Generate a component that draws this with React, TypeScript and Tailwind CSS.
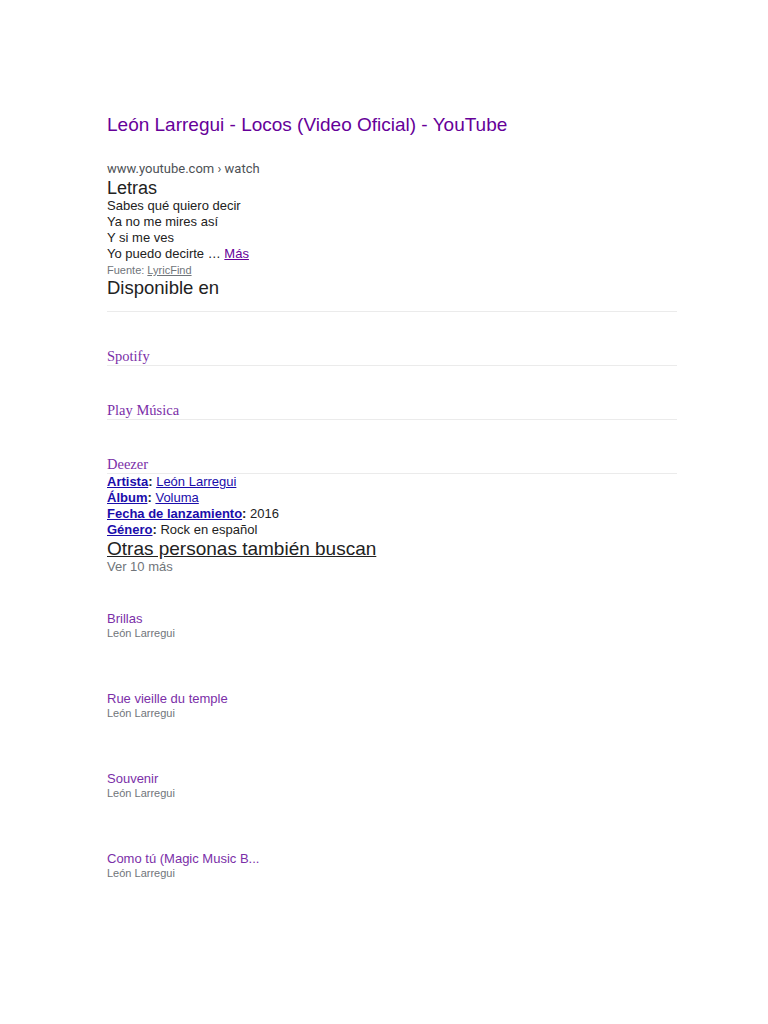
import React from 'react';

const PROVIDERS = ['Spotify', 'Play Música', 'Deezer'];

const RELATED = [
  { title: 'Brillas', artist: 'León Larregui' },
  { title: 'Rue vieille du temple', artist: 'León Larregui' },
  { title: 'Souvenir', artist: 'León Larregui' },
  { title: 'Como tú (Magic Music B...', artist: 'León Larregui' },
];

const App: React.FC = () => {
  return (
    <div className="min-h-[1024px] bg-white font-['Liberation_Sans',Arial,sans-serif] text-[#222]">
      <div className="ml-[107px] w-[570px] pt-[114px] pb-20">
        <a className="block text-[19px] leading-[22px] text-[#660099]">
          León Larregui - Locos (Video Oficial) - YouTube
        </a>
        <div className="mt-[25px] font-['Roboto',sans-serif] text-[13px] leading-[16px] text-[#4d5156]">
          www.youtube.com › watch
        </div>

        {/* letras */}
        <div className="mt-[1px] text-[18px] leading-[20px] text-[#222]">Letras</div>
        <div className="text-[13px] leading-[16px] text-[#222]">
          <div>Sabes qué quiero decir</div>
          <div>Ya no me mires así</div>
          <div>Y si me ves</div>
          <div>
            Yo puedo decirte …{' '}
            <a className="text-[#660099] underline">Más</a>
          </div>
        </div>
        <div className="mt-[1px] text-[11px] leading-[14px] text-[#70757a]">
          Fuente: <a className="underline">LyricFind</a>
        </div>
        <div className="text-[18.5px] leading-[22px] text-[#222]">Disponible en</div>

        <div className="mt-[12px] border-t border-[#ebebeb]">
          {PROVIDERS.map((p) => (
            <div key={p} className="border-b border-[#ebebeb] pt-[35px]">
              <a className="block font-['Liberation_Serif',serif] text-[14.5px] leading-[18px] text-[#7b2fa8]">{p}</a>
            </div>
          ))}
        </div>

        {/* ficha */}
        <div className="text-[13px] leading-[16px] text-[#222]">
          <div>
            <a className="font-bold text-[#1a0dab] underline">Artista</a>
            <span className="font-bold">:</span>{' '}
            <a className="text-[#1a0dab] underline">León Larregui</a>
          </div>
          <div>
            <a className="font-bold text-[#1a0dab] underline">Álbum</a>
            <span className="font-bold">:</span>{' '}
            <a className="text-[#1a0dab] underline">Voluma</a>
          </div>
          <div>
            <a className="font-bold text-[#1a0dab] underline">Fecha de lanzamiento</a>
            <span className="font-bold">:</span> 2016
          </div>
          <div>
            <a className="font-bold text-[#1a0dab] underline">Género</a>
            <span className="font-bold">:</span> Rock en español
          </div>
        </div>

        <div className="text-[19px] leading-[21px] text-[#222] underline">Otras personas también buscan</div>
        <div className="text-[13px] leading-[16px] text-[#70757a]">Ver 10 más</div>

        <div className="mt-[36px] flex flex-col gap-[52px]">
          {RELATED.map((r) => (
            <div key={r.title}>
              <a className="block text-[13px] leading-[16px] text-[#7b2fa8]">{r.title}</a>
              <div className="text-[11px] leading-[12px] text-[#70757a]">{r.artist}</div>
            </div>
          ))}
        </div>
      </div>
    </div>
  );
};

export default App;
